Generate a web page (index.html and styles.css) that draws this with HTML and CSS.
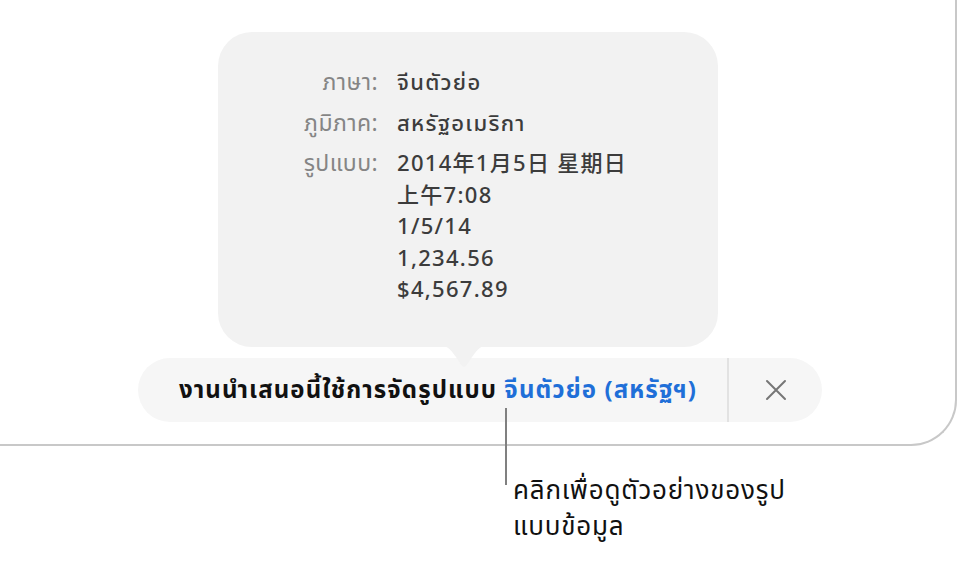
FILE: index.html
```html
<!DOCTYPE html>
<html lang="th">
<head>
    <meta charset="utf-8">
    <title>รูปแบบข้อมูล</title>
    <link rel="stylesheet" href="styles.css">
</head>
<body>
    <div class="window">
        <div class="stage">
            <div class="popover">
                <div class="info-grid">
                    <div class="label">ภาษา:</div>
                    <div class="value">จีนตัวย่อ</div>
                    <div class="label">ภูมิภาค:</div>
                    <div class="value">สหรัฐอเมริกา</div>
                    <div class="label">รูปแบบ:</div>
                    <div class="value">
                        <div>2014年1月5日 星期日</div>
                        <div>上午7:08</div>
                        <div>1/5/14</div>
                        <div>1,234.56</div>
                        <div>$4,567.89</div>
                    </div>
                </div>
                <svg class="tail" width="56" height="24" viewBox="0 0 56 24">
                    <path d="M0 0 C12 0 14 4 20 12 C24 18 26 22 28 22 C30 22 32 18 36 12 C42 4 44 0 56 0 Z" fill="#f2f2f2"/>
                </svg>
            </div>
            <div class="format-bar">
                <div class="bar-text">งานนำเสนอนี้ใช้การจัดรูปแบบ <a class="bar-link">จีนตัวย่อ (สหรัฐฯ)</a></div>
                <div class="bar-close">
                    <svg width="22" height="22" viewBox="0 0 22 22">
                        <path d="M2 2 L20 20 M20 2 L2 20" stroke="#767676" stroke-width="2" stroke-linecap="round"/>
                    </svg>
                </div>
            </div>
        </div>
    </div>
    <div class="callout">คลิกเพื่อดูตัวอย่างของรูป<br>แบบข้อมูล</div>
</body>
</html>
```

FILE: styles.css
```css
body {
    margin: 0;
    font-family: "Noto Sans", "Noto Sans Thai", "Noto Sans CJK SC", sans-serif;
    background: #fff;
    color: #111;
}
.window {
    width: 955px;
    height: 444px;
    border-right: 2px solid #c8c8c8;
    border-bottom: 2px solid #c8c8c8;
    border-bottom-right-radius: 46px;
    box-sizing: content-box;
}
.stage {
    padding: 32px 0 0 138px;
}
.popover {
    position: relative;
    width: 500px;
    height: 315px;
    margin-left: 80px;
    background: #f2f2f2;
    border-radius: 34px;
    box-sizing: border-box;
    padding: 34px 0 0 64px;
}
.info-grid {
    display: grid;
    grid-template-columns: 96px auto;
    column-gap: 19px;
    row-gap: 9px;
    line-height: 31.5px;
}
.label {
    text-align: right;
    color: #858585;
    font-size: 23px;
    letter-spacing: 0.4px;
    white-space: nowrap;
}
.value {
    color: #3c3c3c;
    font-size: 22px;
    font-weight: 500;
    letter-spacing: 1.3px;
}
.tail {
    position: absolute;
    left: 218px;
    top: 313px;
}
.format-bar {
    display: flex;
    align-items: center;
    width: 684px;
    height: 64px;
    margin-top: 11px;
    background: #f6f6f6;
    border-radius: 32px;
}
.bar-text {
    flex: 1;
    padding-left: 41px;
    font-size: 24px;
    font-weight: 700;
    letter-spacing: 1.1px;
    color: #111;
    white-space: nowrap;
}
.bar-link {
    color: #1f6fd8;
}
.bar-close {
    width: 93px;
    height: 64px;
    border-left: 2px solid #e2e2e2;
    display: flex;
    align-items: center;
    justify-content: center;
}
.callout {
    position: relative;
    margin: 25px 0 0 513px;
    font-size: 26px;
    line-height: 36px;
    letter-spacing: 0.8px;
    color: #111;
}
.callout::before {
    content: "";
    position: absolute;
    left: -8px;
    top: -63px;
    width: 2px;
    height: 77px;
    background: #808080;
}
```
